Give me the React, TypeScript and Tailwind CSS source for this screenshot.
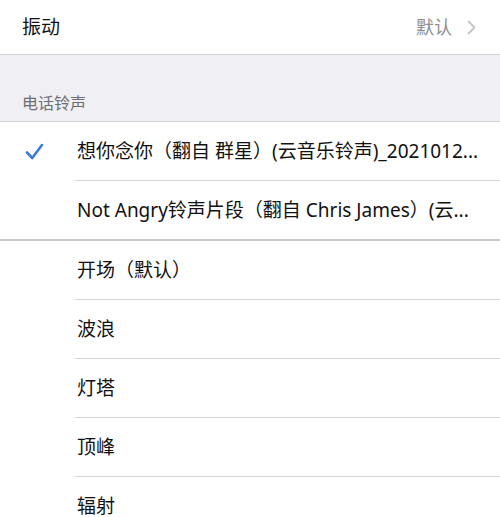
import React from "react";

const font = {
  fontFamily: '"Noto Sans", "Noto Sans CJK SC", sans-serif',
};

function Item({ text, checked, last }: { text: string; checked?: boolean; last?: boolean }) {
  return (
    <div className="flex flex-col bg-white">
      <div className="flex h-[58px] items-center">
        <div className="flex w-[77px] shrink-0 items-center pl-[25px]">
          {checked && (
            <svg width="19" height="17" viewBox="0 0 19 17" fill="none">
              <path d="M2 9.5 L7.2 15 L17 2" stroke="#3b7bd8" strokeWidth="2.6" strokeLinecap="round" strokeLinejoin="round" />
            </svg>
          )}
        </div>
        <div className="overflow-hidden whitespace-nowrap text-[19px] text-[#111]">{text}</div>
      </div>
      {!last && <div className="ml-[75px] h-px bg-[#d6d6da]" />}
    </div>
  );
}

export default function App() {
  return (
    <div className="h-[517px] w-[500px] overflow-hidden bg-white" style={font}>
      <div className="flex h-[55px] items-center justify-between border-b border-[#d4d4d8] bg-white pl-[22px] pr-[24px]">
        <span className="text-[19px] text-[#111]">振动</span>
        <div className="flex items-center gap-[15px]">
          <span className="text-[18px] text-[#8e8e93]">默认</span>
          <svg width="9" height="15" viewBox="0 0 9 15" fill="none">
            <path d="M1.5 1.5 L7.5 7.5 L1.5 13.5" stroke="#c4c4c8" strokeWidth="1.8" strokeLinecap="round" strokeLinejoin="round" />
          </svg>
        </div>
      </div>
      <div className="flex h-[67px] items-end border-b border-[#d4d4d8] bg-[#efeff4] pb-[6px] pl-[22px]">
        <span className="text-[16px] text-[#6d6d72]">电话铃声</span>
      </div>
      <Item text="想你念你（翻自 群星）(云音乐铃声)_2021012..." checked />
      <Item text="Not Angry铃声片段（翻自 Chris James）(云..." last />
      <div className="h-[2px] bg-[#c8c8cc]" />
      <Item text="开场（默认）" />
      <Item text="波浪" />
      <Item text="灯塔" />
      <Item text="顶峰" />
      <Item text="辐射" />
    </div>
  );
}
